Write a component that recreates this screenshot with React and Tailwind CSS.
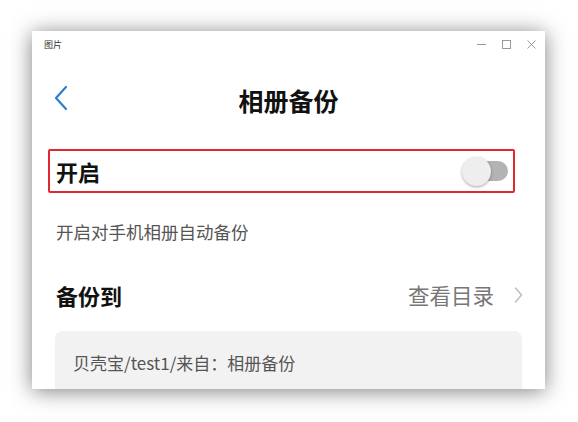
export default function App() {
  const font = { fontFamily: '"Noto Sans CJK SC", "Noto Sans", sans-serif' };
  return (
    <div className="w-[578px] h-[422px] bg-white pl-[32px] pt-[31px] overflow-hidden" style={font}>
      <div className="w-[513px] h-[358px] bg-white overflow-hidden flex flex-col shadow-[0_2px_20px_rgba(0,0,0,0.5)]">
        {/* title bar */}
        <div className="shrink-0 h-[26px] flex items-center justify-between pl-[12px] pr-[8px]">
          <span className="text-[9px] text-[#333] leading-none">图片</span>
          <div className="flex items-center gap-[14px] text-[#999]">
            <svg width="11" height="11" viewBox="0 0 11 11"><path d="M1 5.5h9" stroke="currentColor" strokeWidth="1" /></svg>
            <svg width="11" height="11" viewBox="0 0 11 11"><rect x="1.5" y="1.5" width="8" height="8" fill="none" stroke="currentColor" strokeWidth="1" /></svg>
            <svg width="11" height="11" viewBox="0 0 11 11"><path d="M1.5 1.5l8 8M9.5 1.5l-8 8" stroke="currentColor" strokeWidth="1" /></svg>
          </div>
        </div>

        {/* header */}
        <div className="shrink-0 relative h-[34px] mt-[26px] flex items-center justify-center">
          <svg className="absolute left-[21px] top-[2px]" width="16" height="26" viewBox="0 0 16 26">
            <path d="M13 2L3 13l10 11" fill="none" stroke="#2b7fd0" strokeWidth="2.2" strokeLinecap="round" strokeLinejoin="round" />
          </svg>
          <span className="text-[25px] font-bold text-[#111] leading-none">相册备份</span>
        </div>

        {/* toggle row */}
        <div className="shrink-0 ml-[16px] mr-[30px] mt-[32px] h-[44px] border-2 border-[#e0282e] rounded-[2px] flex items-center justify-between pl-[6px] pr-[5px]">
          <span className="text-[22px] font-bold text-[#111] leading-none">开启</span>
          <div className="relative w-[46px] h-[30px] flex items-center">
            <div className="absolute right-0 w-[38px] h-[20px] rounded-full bg-[#b3b3b3]" />
            <div className="absolute left-0 w-[29px] h-[29px] rounded-full bg-[#eeeeee] shadow-[0_1px_3px_rgba(0,0,0,0.35)]" />
          </div>
        </div>

        <div className="shrink-0 pl-[24px] mt-[30px] text-[17.5px] text-[#555] leading-none">开启对手机相册自动备份</div>

        {/* backup target row */}
        <div className="shrink-0 mt-[43px] pl-[24px] pr-[22px] flex items-center justify-between">
          <span className="text-[22px] font-bold text-[#111] leading-none">备份到</span>
          <div className="flex items-center gap-[20px]">
            <span className="text-[21.5px] text-[#777] leading-none">查看目录</span>
            <svg width="9" height="18" viewBox="0 0 9 18">
              <path d="M1.5 2l6 7-6 7" fill="none" stroke="#bbb" strokeWidth="1.4" strokeLinecap="round" strokeLinejoin="round" />
            </svg>
          </div>
        </div>

        <div className="shrink-0 mx-[23px] mt-[25px] bg-[#f2f2f2] rounded-[8px] h-[70px] pl-[18px] pt-[20px]">
          <span className="text-[17px] text-[#555] leading-none">贝壳宝/test1/来自：相册备份</span>
        </div>
      </div>
    </div>
  );
}
